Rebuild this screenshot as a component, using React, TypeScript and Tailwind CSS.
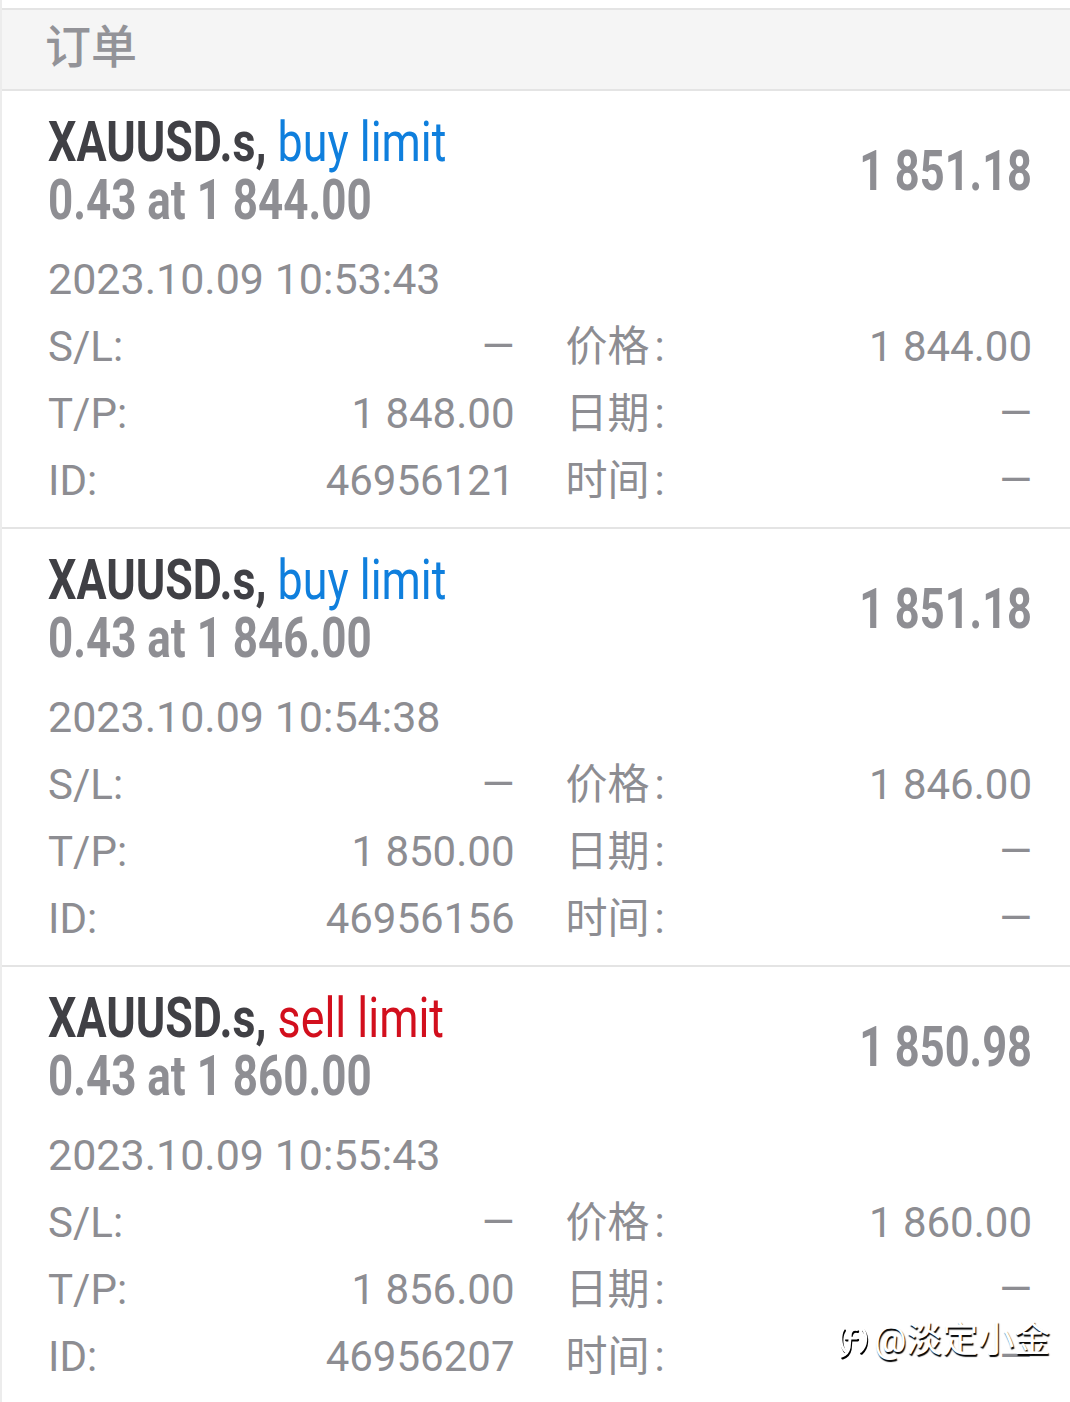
import React from "react";

type Order = {
  side: "buy limit" | "sell limit";
  volume: string;
  openPrice: string;
  current: string;
  time: string;
  tp: string;
  id: string;
};

const ORDERS: Order[] = [
  { side: "buy limit", volume: "0.43", openPrice: "1 844.00", current: "1 851.18", time: "2023.10.09 10:53:43", tp: "1 848.00", id: "46956121" },
  { side: "buy limit", volume: "0.43", openPrice: "1 846.00", current: "1 851.18", time: "2023.10.09 10:54:38", tp: "1 850.00", id: "46956156" },
  { side: "sell limit", volume: "0.43", openPrice: "1 860.00", current: "1 850.98", time: "2023.10.09 10:55:43", tp: "1 856.00", id: "46956207" },
];

const FONT = "[font-family:Roboto,'Noto_Sans_CJK_SC',sans-serif]";

function Row({ label, value, cjk }: { label: string; value: string; cjk?: boolean }) {
  return (
    <div className="flex justify-between whitespace-nowrap">
      <span>
        {label}
        <span className={cjk ? "ml-[5px]" : ""}>:</span>
      </span>
      <span>{value}</span>
    </div>
  );
}

function OrderCard({ o }: { o: Order }) {
  const sideColor = o.side === "buy limit" ? "text-[#0f7fdd]" : "text-[#d20f1d]";
  return (
    <div className="border-b-2 border-[#e4e4e4] pl-[46px] pr-[38px] pt-[22px] pb-[13px]">
      <div className="flex items-center justify-between">
        <div className="text-[56px] leading-[58px]">
          <div className="origin-left scale-x-[0.8] whitespace-nowrap">
            <span className="font-bold text-[#404045]">XAUUSD.s, </span>
            <span className={sideColor}>{o.side}</span>
          </div>
          <div className="origin-left scale-x-[0.785] whitespace-nowrap font-bold text-[#8e8e93]">
            {o.volume} at {o.openPrice}
          </div>
        </div>
        <div className="origin-right scale-x-[0.775] whitespace-nowrap text-[56px] leading-[58px] font-bold text-[#8e8e93]">
          {o.current}
        </div>
      </div>

      <div className="mt-[17px] text-[43px] leading-[67px] text-[#8d8d92]">{o.time}</div>

      <div className="grid grid-cols-2 gap-x-[51px] text-[42px] leading-[67px] text-[#8d8d92]">
        <Row label="S/L" value="—" />
        <Row label="价格" value={o.openPrice} cjk />
        <Row label="T/P" value={o.tp} />
        <Row label="日期" value="—" cjk />
        <Row label="ID" value={o.id} />
        <Row label="时间" value="—" cjk />
      </div>
    </div>
  );
}

export default function App() {
  return (
    <div className={`relative w-[1070px] h-[1402px] overflow-hidden bg-white border-l-2 border-[#ececec] ${FONT}`}>
      {/* header */}
      <div className="mt-[8px] h-[83px] border-y-2 border-[#e4e4e4] bg-[#f5f5f5] pl-[43px] pb-[5px] flex items-center">
        <span className="text-[46px] font-medium text-[#939398]">订单</span>
      </div>

      {ORDERS.map((o) => (
        <OrderCard key={o.id} o={o} />
      ))}

      {/* watermark */}
      <div className="absolute left-[834px] top-[1320px] flex items-center gap-[4px] text-[36px] leading-none text-white [text-shadow:1px_2px_1px_#000]">
        <svg width="34" height="40" viewBox="0 0 36 40" fill="none" stroke="#fff" strokeWidth="3" className="[filter:drop-shadow(1px_2px_0_#000)]">
          <path d="M8 8 C4 14 4 26 10 32" strokeLinecap="round" />
          <path d="M28 8 C33 14 33 26 26 32" strokeLinecap="round" />
          <path d="M22 9 C17 8 15 11 15 16 L14 28 C13 33 10 36 6 37" strokeLinecap="round" />
          <path d="M10 18 L22 18" strokeLinecap="round" />
        </svg>
        <span>@淡定小金</span>
      </div>
    </div>
  );
}
